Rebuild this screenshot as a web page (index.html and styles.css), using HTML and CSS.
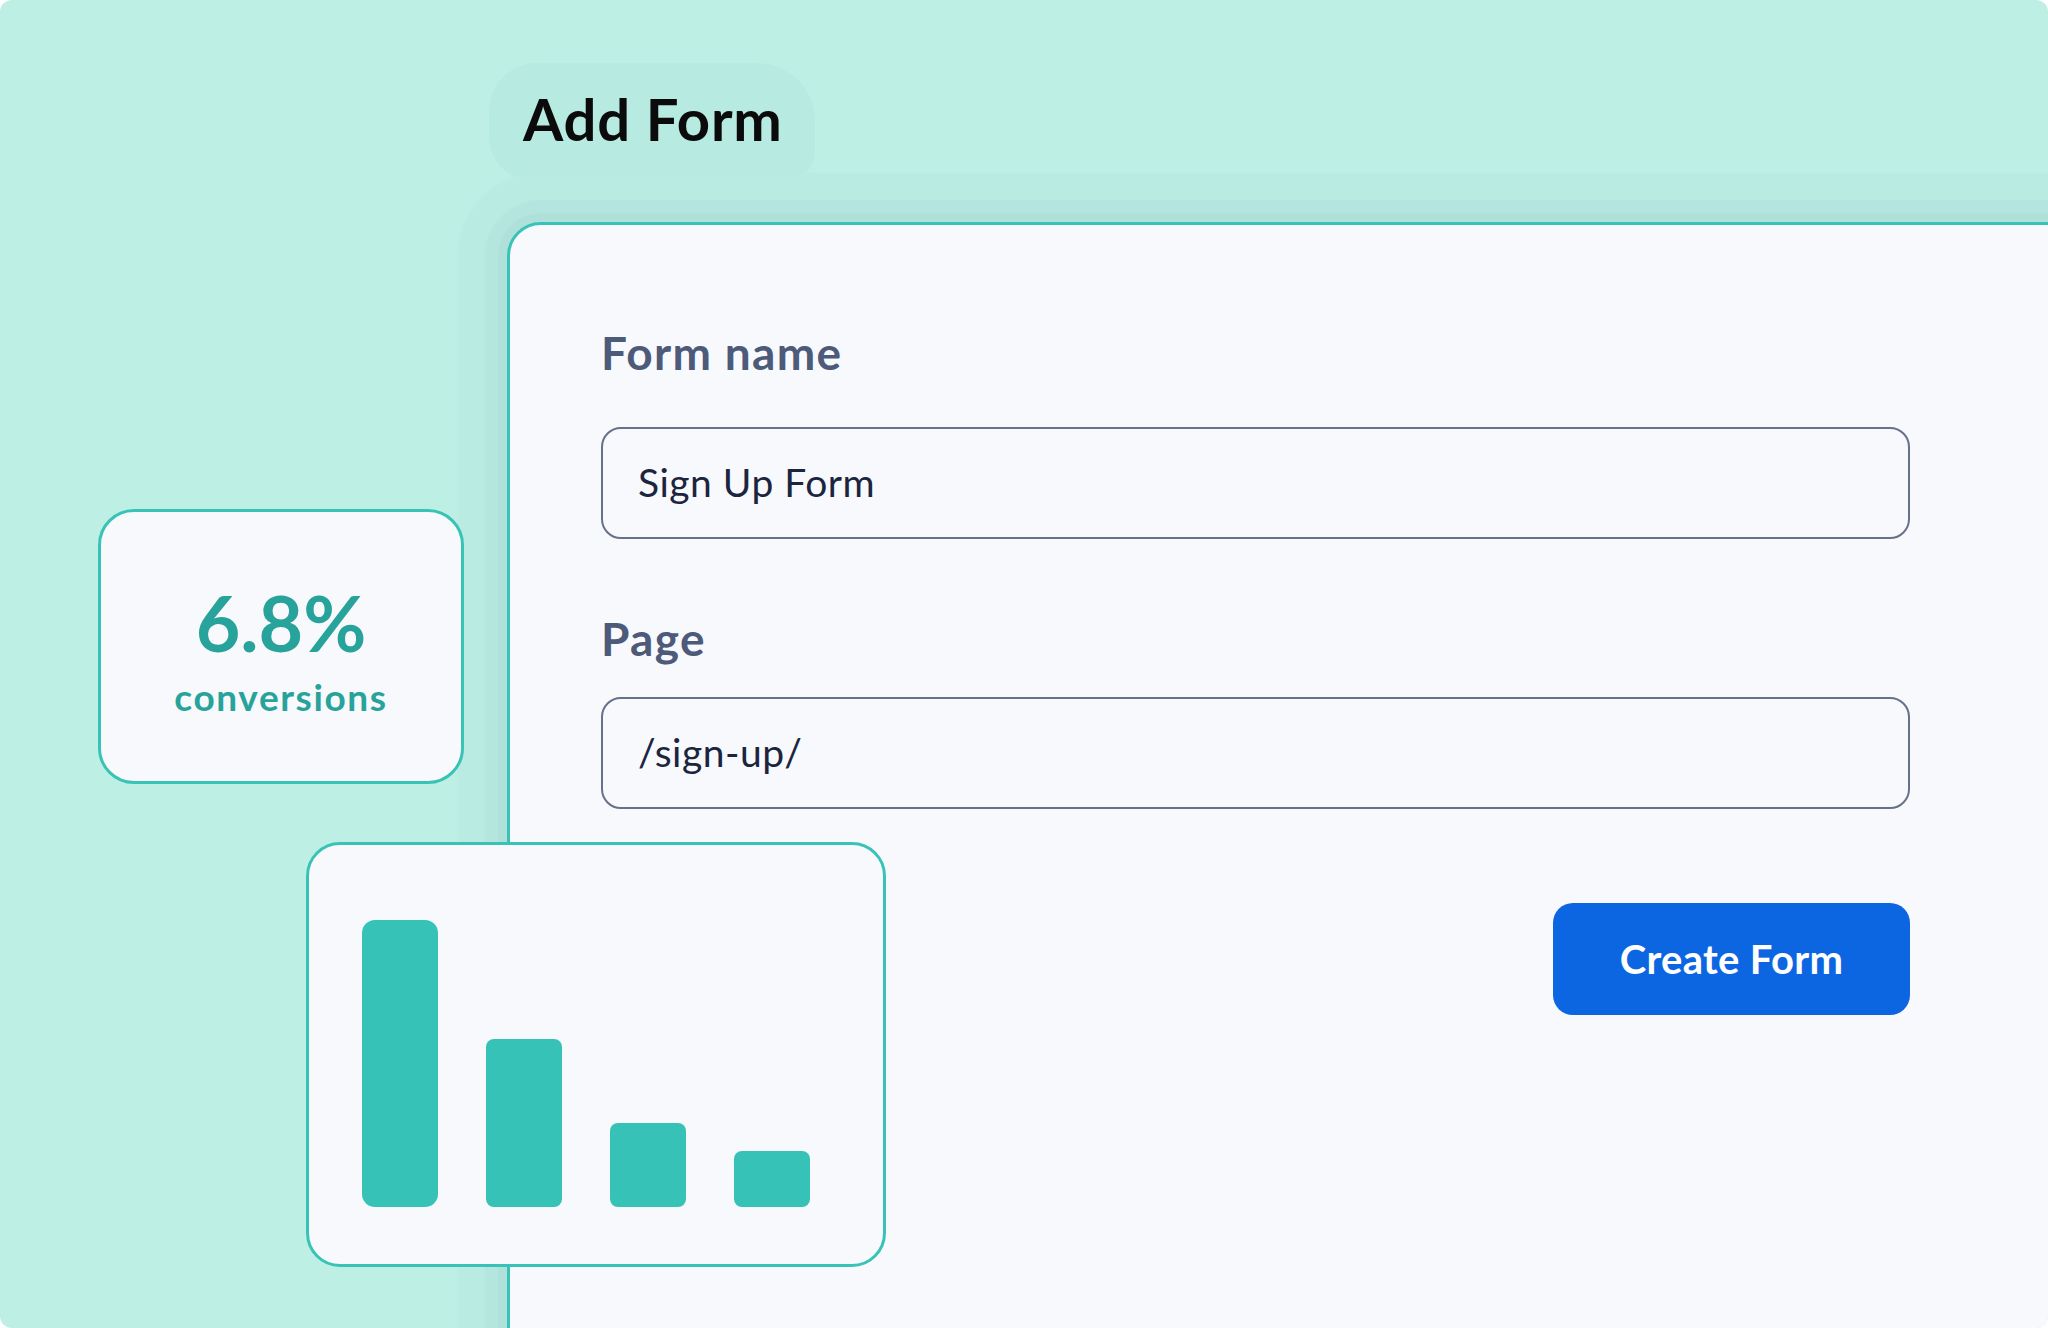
FILE: index.html
```html
<!DOCTYPE html>
<html lang="en">
<head>
<meta charset="utf-8">
<title>Add Form</title>
<link rel="stylesheet" href="styles.css">
</head>
<body>
<div class="frame">
  <div class="title-blob"><h1 class="title">Add Form</h1></div>
  <div class="card">
    <div class="label label-name">Form name</div>
    <div class="input input-name">Sign Up Form</div>
    <div class="label label-page">Page</div>
    <div class="input input-page">/sign-up/</div>
    <div class="actions"><button class="btn" type="button">Create Form</button></div>
  </div>
  <div class="stat-card">
    <div class="stat-value">6.8%</div>
    <div class="stat-label">conversions</div>
  </div>
  <div class="chart-card">
    <div class="bar bar-big" style="height:287px"></div>
    <div class="bar" style="height:168px"></div>
    <div class="bar" style="height:84px"></div>
    <div class="bar" style="height:56px"></div>
  </div>
</div>
</body>
</html>
```

FILE: styles.css
```css
* { box-sizing: border-box; }
html, body { margin: 0; padding: 0; background: #ffffff; }
body { font-family: Lato, "Open Sans", sans-serif; }

.frame {
  position: relative;
  width: 2048px;
  height: 1328px;
  border-radius: 12px;
  overflow: hidden;
  background: #beefe4;
  padding: 63px 0 0 489px;
}

.title-blob {
  position: relative;
  z-index: 0;
  width: 326px;
  height: 118px;
  padding: 21px 0 0 34px;
  background: #b7eae1;
  border-radius: 48px 58px 30px 44px;
}
.title {
  margin: 0;
  font-size: 58px;
  line-height: 1.2;
  font-weight: 700;
  letter-spacing: 0.8px;
  color: #0b0b0b;
  white-space: nowrap;
}

.card {
  position: relative;
  z-index: 1;
  width: 1600px;
  height: 1200px;
  margin: 41px 0 0 18px;
  background: #f7f9fc;
  border: 3px solid #38c3b6;
  border-radius: 34px;
  padding: 100px 0 0 91px;
  box-shadow:
    0 0 1px 9px #b0e0da,
    0 0 2px 22px #b4e6df,
    0 0 3px 49px #b9ebe2;
}

.label {
  font-size: 46px;
  line-height: 1.2;
  font-weight: 700;
  letter-spacing: 1.3px;
  color: #4e5a79;
}
.input {
  display: flex;
  align-items: center;
  width: 1309px;
  height: 112px;
  border: 2px solid #66718c;
  border-radius: 20px;
  padding: 0 0 3px 35px;
  font-size: 39px;
  letter-spacing: 0.5px;
  color: #1c2540;
}
.input-name { margin-top: 47px; }
.label-page { margin-top: 72px; }
.input-page { margin-top: 31px; }

.actions {
  width: 1309px;
  display: flex;
  justify-content: flex-end;
  margin-top: 94px;
}
.btn {
  width: 357px;
  height: 112px;
  border: 0;
  border-radius: 20px;
  background: #0d66e1;
  color: #ffffff;
  font-family: Lato, "Open Sans", sans-serif;
  font-size: 40px;
  font-weight: 700;
  letter-spacing: 0.3px;
  padding: 0;
}

.stat-card {
  position: absolute;
  z-index: 2;
  left: 98px;
  top: 509px;
  width: 366px;
  height: 275px;
  background: #f7f9fc;
  border: 3px solid #38c3b6;
  border-radius: 36px;
  padding-top: 64px;
  text-align: center;
  color: #27a39b;
}
.stat-value {
  font-size: 77px;
  line-height: 1.2;
  font-weight: 700;
}
.stat-label {
  margin-top: 7px;
  font-size: 37px;
  line-height: 1.2;
  font-weight: 700;
  letter-spacing: 1.6px;
}

.chart-card {
  position: absolute;
  z-index: 2;
  left: 306px;
  top: 842px;
  width: 580px;
  height: 425px;
  background: #f7f9fc;
  border: 3px solid #38c3b6;
  border-radius: 34px;
  display: flex;
  align-items: flex-end;
  gap: 48px;
  padding: 0 0 57px 53px;
}
.bar {
  width: 76px;
  background: #36c2b6;
  border-radius: 8px;
}
.bar-big { border-radius: 13px; }
```
